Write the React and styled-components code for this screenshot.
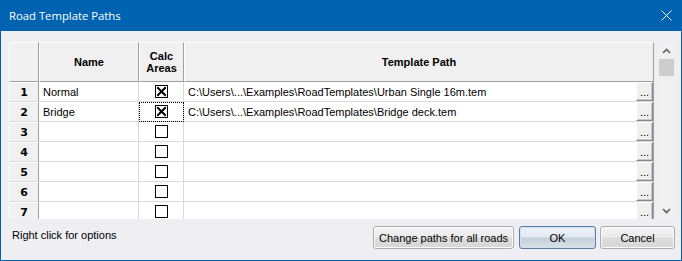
import React from "react";
import styled, { createGlobalStyle } from "styled-components";

const GlobalStyle = createGlobalStyle`
  html, body { margin: 0; padding: 0; background: #ffffff; }
  * { box-sizing: border-box; }
`;

const Window = styled.div`
  width: 682px;
  height: 261px;
  display: flex;
  flex-direction: column;
  background: #eeeef3;
  border: 1px solid #0063b1;
  border-top: none;
  font-family: "Liberation Sans", Arial, sans-serif;
  font-size: 11px;
  color: #000;
  overflow: hidden;
`;

const TitleBar = styled.div`
  height: 31px;
  flex: none;
  background: #0063b1;
  color: #fff;
  display: flex;
  align-items: center;
  justify-content: space-between;
  padding: 0 10px 1px 9px;
  margin: 0 -1px;
  font-family: "Segoe UI", "Open Sans", sans-serif;
  font-size: 11.3px;
`;

const Body = styled.div`
  flex: 1;
  display: flex;
  flex-direction: column;
  padding: 11px 6px 0 8px;
`;

const GridBox = styled.div`
  height: 177px;
  width: 666px;
  display: flex;
  gap: 4px;
  flex: none;
`;

const Table = styled.div`
  width: 645px;
  height: 177px;
  overflow: hidden;
  display: grid;
  grid-template-columns: 30px 100px 45px 470px;
  grid-auto-rows: 20px;
  grid-template-rows: 40px;
  align-content: start;
`;

const HeadCell = styled.div`
  background: #f0f0f0;
  border-top: 1px solid #ffffff;
  border-left: 1px solid #ffffff;
  border-right: 1px solid #a0a0a0;
  border-bottom: 1px solid #a0a0a0;
  display: flex;
  align-items: center;
  justify-content: center;
  text-align: center;
  font-weight: bold;
  line-height: 12px;
`;

const RowHead = styled.div`
  background: #f0f0f0;
  border-top: 1px solid #ffffff;
  border-left: 1px solid #ffffff;
  border-right: 1px solid #a0a0a0;
  border-bottom: 1px solid #d9d9d9;
  display: flex;
  align-items: center;
  justify-content: center;
  font-family: "DejaVu Sans", Verdana, sans-serif;
  font-weight: bold;
  font-size: 11px;
  padding-top: 1px;
`;

const Cell = styled.div`
  background: #ffffff;
  border-right: 1px solid #d9d9d9;
  border-bottom: 1px solid #d9d9d9;
  display: flex;
  align-items: center;
  justify-content: ${(p) => (p.$center ? "center" : "flex-start")};
  padding-left: ${(p) => (p.$center ? "0" : "4px")};
  white-space: nowrap;
  overflow: hidden;
  position: relative;
  outline: ${(p) => (p.$focus ? "1px dotted #000" : "none")};
  outline-offset: -1px;
`;

const PathCell = styled(Cell)`
  padding-left: 4px;
  border-right: 1px solid #a0a0a0;
`;

const PathText = styled.span`
  flex: 1;
  overflow: hidden;
`;

const EllipsisButton = styled.div`
  width: 17px;
  height: 19px;
  flex: none;
  align-self: flex-start;
  background: #f0f0f0;
  border-top: 1px solid #ffffff;
  border-left: 1px solid #ffffff;
  border-right: 1px solid #8a8a8a;
  border-bottom: 1px solid #8a8a8a;
  box-shadow: inset -1px -1px 0 #c8c8c8;
  font-size: 11px;
  display: flex;
  align-items: flex-end;
  justify-content: center;
  line-height: 10px;
  padding-bottom: 3px;
`;

const Scrollbar = styled.div`
  width: 17px;
  height: 177px;
  background: #f0f0f0;
  display: flex;
  flex-direction: column;
  align-items: center;
`;

const ArrowBtn = styled.div`
  width: 17px;
  height: 17px;
  display: flex;
  align-items: center;
  justify-content: center;
  flex: none;
`;

const Thumb = styled.div`
  width: 15px;
  height: 17px;
  background: #cdcdcd;
  flex: none;
`;

const Track = styled.div`
  flex: 1;
`;

const Footer = styled.div`
  height: 40px;
  display: flex;
  align-items: flex-start;
  padding: 7px 0 0 3px;
`;

const Hint = styled.div`
  flex: 1;
  line-height: 23px;
  margin-top: -2px;
`;

const Button = styled.button`
  width: ${(p) => p.$w}px;
  height: 23px;
  margin-left: ${(p) => p.$gap}px;
  font-family: "Liberation Sans", Arial, sans-serif;
  font-size: 11px;
  color: #000;
  border: 1px solid ${(p) => (p.$default ? "#5b7fa3" : "#acacac")};
  border-radius: 3px;
  padding: 0;
  box-shadow: inset 0 0 0 1px ${(p) => (p.$default ? "#cfe0ee" : "#fcfcfc")};
  background: ${(p) =>
    p.$default
      ? "linear-gradient(#eef3f8 0%, #e2e9f0 48%, #c4ced8 52%, #d9e0e8 100%)"
      : "linear-gradient(#f3f3f3 0%, #ebebeb 48%, #dddddd 52%, #d6d6d6 100%)"};
`;

const Check = ({ checked }) => (
  <svg width="13" height="13" viewBox="0 0 13 13">
    <rect x="0.5" y="0.5" width="12" height="12" fill="#fff" stroke="#000" />
    {checked && (
      <path d="M3 3 L10 10 M10 3 L3 10" stroke="#000" strokeWidth="2" strokeLinecap="square" />
    )}
  </svg>
);

const Chevron = ({ up }) => (
  <svg width="9" height="6" viewBox="0 0 9 6">
    <path
      d={up ? "M1 5 L4.5 1.5 L8 5" : "M1 1 L4.5 4.5 L8 1"}
      fill="none"
      stroke="#606060"
      strokeWidth="1.6"
    />
  </svg>
);

const CloseIcon = () => (
  <svg width="11" height="11" viewBox="0 0 11 11">
    <path d="M0.5 0.5 L10.5 10.5 M10.5 0.5 L0.5 10.5" stroke="#fff" strokeWidth="1" />
  </svg>
);

const rows = [
  { name: "Normal", checked: true, path: "C:\\Users\\...\\Examples\\RoadTemplates\\Urban Single 16m.tem" },
  { name: "Bridge", checked: true, path: "C:\\Users\\...\\Examples\\RoadTemplates\\Bridge deck.tem", focus: true },
  { name: "", checked: false, path: "" },
  { name: "", checked: false, path: "" },
  { name: "", checked: false, path: "" },
  { name: "", checked: false, path: "" },
  { name: "", checked: false, path: "" },
];

export default function App() {
  return (
    <>
      <GlobalStyle />
      <Window>
        <TitleBar>
          <span>Road Template Paths</span>
          <CloseIcon />
        </TitleBar>
        <Body>
          <GridBox>
            <Table>
              <HeadCell />
              <HeadCell>Name</HeadCell>
              <HeadCell>
                Calc
                <br />
                Areas
              </HeadCell>
              <HeadCell>Template Path</HeadCell>
              {rows.map((r, i) => (
                <React.Fragment key={i}>
                  <RowHead>{i + 1}</RowHead>
                  <Cell>{r.name}</Cell>
                  <Cell $center $focus={r.focus}>
                    <Check checked={r.checked} />
                  </Cell>
                  <PathCell>
                    <PathText>{r.path}</PathText>
                    <EllipsisButton>...</EllipsisButton>
                  </PathCell>
                </React.Fragment>
              ))}
            </Table>
            <Scrollbar>
              <ArrowBtn>
                <Chevron up />
              </ArrowBtn>
              <Thumb />
              <Track />
              <ArrowBtn>
                <Chevron />
              </ArrowBtn>
            </Scrollbar>
          </GridBox>
          <Footer>
            <Hint>Right click for options</Hint>
            <Button $w={141} $gap={0}>Change paths for all roads</Button>
            <Button $w={77} $gap={5} $default>OK</Button>
            <Button $w={75} $gap={4}>Cancel</Button>
          </Footer>
        </Body>
      </Window>
    </>
  );
}
